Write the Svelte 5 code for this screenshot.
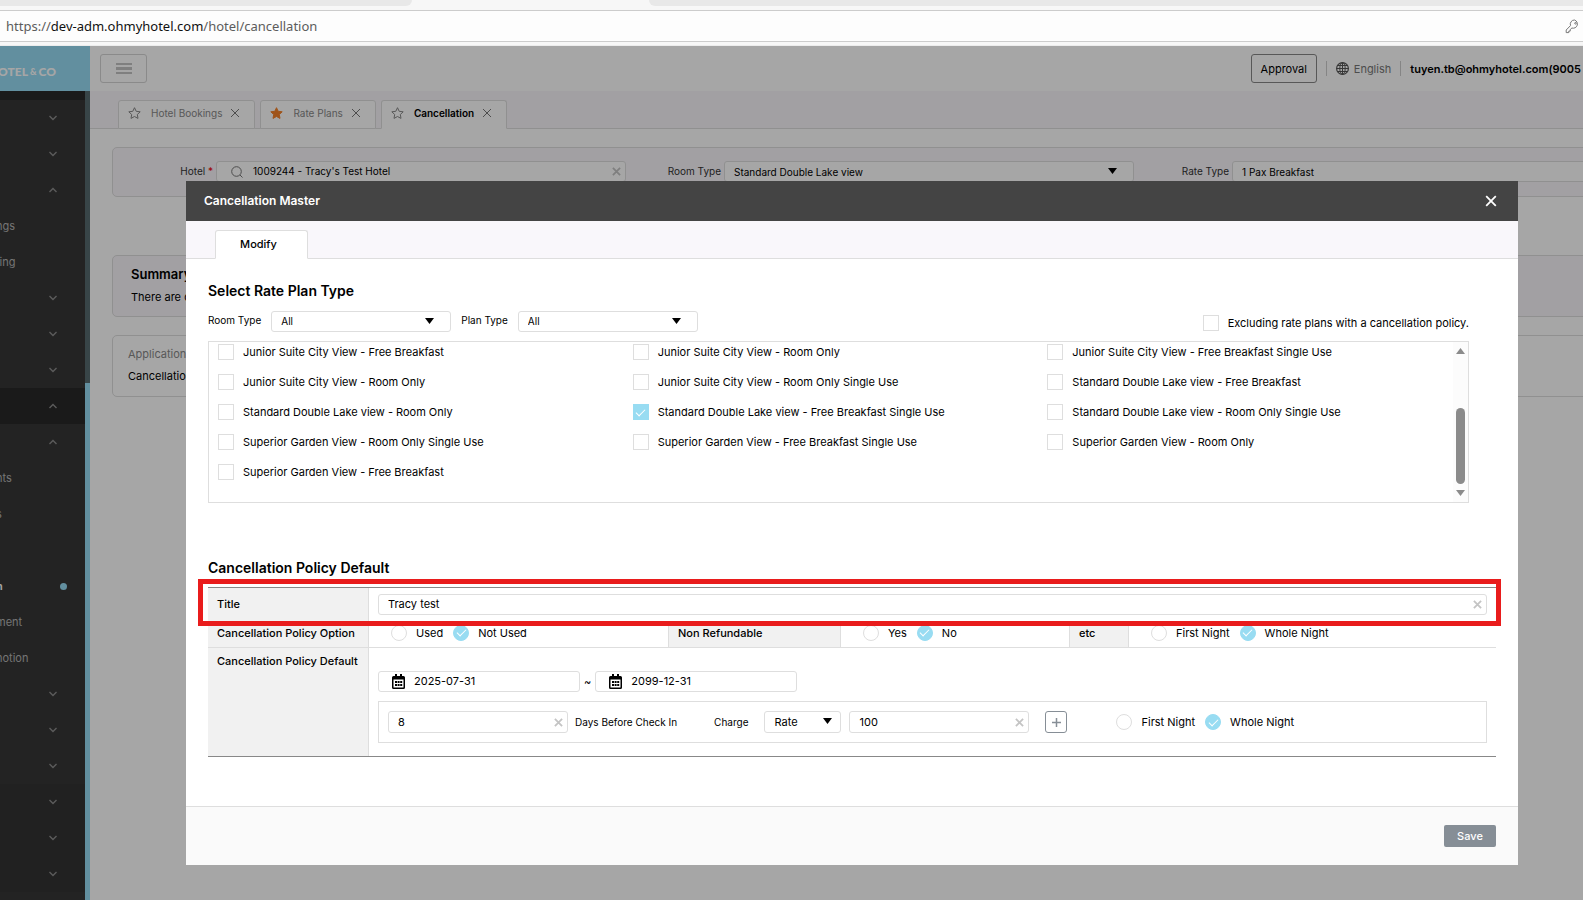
<script>
  const menu = [
    { icon: "down" },
    { icon: "down" },
    { icon: "up" },
    { label: "ngs" },
    { label: "ting" },
    { icon: "down" },
    { icon: "down" },
    { icon: "down" },
    { icon: "up", open: true },
    { icon: "up" },
    { label: "nts" },
    { label: "s" },
    {},
    { label: "n", current: true },
    { label: "ment" },
    { label: "notion" },
    { icon: "down" },
    { icon: "down" },
    { icon: "down" },
    { icon: "down", dark: true },
    { icon: "down", dark: true },
    { icon: "down", dark: true },
  ];

  const tabs = [
    { name: "Hotel Bookings" },
    { name: "Rate Plans", starred: true },
    { name: "Cancellation", active: true },
  ];

  let plans = $state([
    { name: "Junior Suite City View - Free Breakfast", checked: false },
    { name: "Junior Suite City View - Room Only", checked: false },
    { name: "Junior Suite City View - Free Breakfast Single Use", checked: false },
    { name: "Junior Suite City View - Room Only", checked: false },
    { name: "Junior Suite City View - Room Only Single Use", checked: false },
    { name: "Standard Double Lake view - Free Breakfast", checked: false },
    { name: "Standard Double Lake view - Room Only", checked: false },
    { name: "Standard Double Lake view - Free Breakfast Single Use", checked: true },
    { name: "Standard Double Lake view - Room Only Single Use", checked: false },
    { name: "Superior Garden View - Room Only Single Use", checked: false },
    { name: "Superior Garden View - Free Breakfast Single Use", checked: false },
    { name: "Superior Garden View - Room Only", checked: false },
    { name: "Superior Garden View - Free Breakfast", checked: false },
  ]);

  let title = $state("Tracy test");
  let hotel = $state("1009244 - Tracy's Test Hotel");
  let dateFrom = $state("2025-07-31");
  let dateTo = $state("2099-12-31");
  let days = $state("8");
  let rate = $state("100");
  let option = $state("Not Used");
  let nonRefundable = $state("No");
  let etc = $state("Whole Night");
  let charge = $state("Whole Night");
</script>

{#snippet caret()}
  <svg class="caret" width="9" height="6" viewBox="0 0 9 6"><path d="M0 0h9L4.500 6z" fill="#000" /></svg>
{/snippet}

{#snippet cross(size, width)}
  <svg width={size} height={size} viewBox="0 0 10 10" fill="none" stroke="currentColor" stroke-width={width}>
    <path d="M1 1l8 8M9 1L1 9" />
  </svg>
{/snippet}

{#snippet calendar()}
  <svg class="calendar" width="13" height="15" viewBox="0 0 13 15">
    <path fill="#000" fill-rule="evenodd" d="M3 0h2v2h3V0h2v2h1.500Q13 2 13 3.500V13.500Q13 15 11.500 15h-10Q0 15 0 13.500v-10Q0 2 1.500 2H3zM1.500 5.500v8h10v-8z" />
    <path fill="#000" d="M3 7h2v2H3zM5.600 7h2v2h-2zM8.200 7h2v2h-2zM3 10h2v2H3zM5.600 10h2v2h-2zM8.200 10h2v2h-2z" />
  </svg>
{/snippet}

<div class="app">
  <div class="browser">
    <div class="tabstrip"><span class="left"></span><span class="right"></span></div>
    <div class="urlbar">
      <span class="url">https://<b>dev-adm.ohmyhotel.com</b>/hotel/cancellation</span>
      <svg width="15" height="15" viewBox="0 0 15 15" fill="none" stroke="#777" stroke-linejoin="round">
        <path d="M9.500 1a4.200 4.200 0 0 0-4 5.600L1.200 11v2.600h2.600v-1.500h1.400v-1.500l1.700-1.600A4.200 4.200 0 1 0 9.500 1z" />
        <circle cx="10.500" cy="4.300" r=".8" />
      </svg>
    </div>
  </div>

  <div class="page">
    <aside>
      <div class="logo">OTEL<small>&amp;</small>CO</div>
      <div class="side">
        <nav>
          {#each menu as item}
            <div class="item" class:open={item.open} class:dark={item.dark} class:current={item.current}>
              <span>{item.label ?? ""}</span>
              {#if item.icon}
                <svg width="8" height="6" viewBox="0 0 8 6" fill="none" stroke="#8c8c8c" stroke-width="1.400">
                  <path d={item.icon === "up" ? "M.5 5L4 1.500 7.500 5" : "M.5 1L4 4.500 7.500 1"} />
                </svg>
              {/if}
              {#if item.current}<i class="dot"></i>{/if}
            </div>
          {/each}
        </nav>
        <div class="track"><div class="thumb"></div></div>
      </div>
    </aside>

    <main>
      <header>
        <button class="burger" aria-label="Menu">
          <svg width="16" height="11" viewBox="0 0 16 11" fill="#c4c4c4"><path d="M0 0h16v2H0zM0 4h16v3H0zM0 9h16v2H0z" /></svg>
        </button>
        <div class="account">
          <button class="approval">Approval</button>
          <span class="bar"></span>
          <svg width="13" height="13" viewBox="0 0 13 13" fill="none" stroke="#555">
            <circle cx="6.500" cy="6.500" r="5.900" stroke-width="1.200" />
            <ellipse cx="6.500" cy="6.500" rx="2.700" ry="5.900" />
            <path d="M6.500.6v11.800M.6 6.500h11.800M1.500 3.500h10M1.500 9.500h10" />
          </svg>
          <span class="lang">English</span>
          <span class="bar"></span>
          <strong>tuyen.tb@ohmyhotel.com(9005</strong>
        </div>
      </header>

      <div class="tabs">
        {#each tabs as tab}
          <div class="tab" class:active={tab.active}>
            <svg width="13" height="12" viewBox="0 0 13 12" stroke-linejoin="round" fill={tab.starred ? "#f5822a" : "none"} stroke={tab.starred ? "#f5822a" : "#888"}>
              <path d="M6.500.7l1.700 3.600 4 .5-2.900 2.700.7 3.900-3.500-1.900L3 11.400l.7-3.900L.8 4.800l4-.5z" />
            </svg>
            <span>{tab.name}</span>
            <button aria-label="Close {tab.name}">{@render cross(10, 1)}</button>
          </div>
        {/each}
      </div>

      <section class="card search">
        <div class="group">
          <label for="hotel">Hotel <em>*</em></label>
          <div class="field">
            <svg class="lens" width="12" height="12" viewBox="0 0 12 12" fill="none" stroke="#777">
              <circle cx="5.500" cy="5.500" r="4.800" /><path d="M9 9l2.500 2.500" />
            </svg>
            <input id="hotel" bind:value={hotel} />
            <button aria-label="Clear hotel">{@render cross(9, 2)}</button>
          </div>
        </div>
        <div class="group">
          <label for="room">Room Type</label>
          <div class="select wide">
            <select id="room"><option>Standard Double Lake view</option></select>
            {@render caret()}
          </div>
        </div>
        <div class="group">
          <label for="rateType">Rate Type</label>
          <div class="select wide">
            <select id="rateType"><option>1 Pax Breakfast</option></select>
          </div>
        </div>
      </section>

      <section class="card summary">
        <h3>Summary</h3>
        <p>There are c</p>
      </section>

      <section class="card policy">
        <p class="muted">Application</p>
        <p>Cancellation</p>
      </section>
    </main>

    <div class="overlay">
      <div class="modal" role="dialog" aria-labelledby="modal-title">
        <div class="modal-head">
          <h1 id="modal-title">Cancellation Master</h1>
          <button aria-label="Close">{@render cross(12, 1.5)}</button>
        </div>
        <div class="modal-tabs"><button>Modify</button></div>

        <div class="content">
          <h2>Select Rate Plan Type</h2>
          <div class="filters">
            <label for="filterRoom">Room Type</label>
            <div class="select">
              <select id="filterRoom"><option>All</option></select>
              {@render caret()}
            </div>
            <label for="filterPlan">Plan Type</label>
            <div class="select">
              <select id="filterPlan"><option>All</option></select>
              {@render caret()}
            </div>
            <label class="check exclude"><input type="checkbox" />Excluding rate plans with a cancellation policy.</label>
          </div>

          <div class="list">
            <div class="plans">
              {#each plans as plan}
                <label class="check"><input type="checkbox" bind:checked={plan.checked} />{plan.name}</label>
              {/each}
            </div>
            <div class="scroll">
              <svg width="9" height="6" viewBox="0 0 9 6"><path d="M4.500 0L9 6H0z" fill="#8b8b8b" /></svg>
              <div class="handle"></div>
              <svg width="9" height="6" viewBox="0 0 9 6"><path d="M0 0h9L4.500 6z" fill="#8b8b8b" /></svg>
            </div>
          </div>

          <h2 class="second">Cancellation Policy Default</h2>
          <div class="table-wrap">
            <table>
              <colgroup>
                <col class="c1" /><col class="c2" /><col class="c3" /><col class="c4" /><col class="c5" /><col />
              </colgroup>
              <tbody>
                <tr class="row-title">
                  <th><label for="title">Title</label></th>
                  <td colspan="5">
                    <div class="field">
                      <input id="title" bind:value={title} />
                      <button aria-label="Clear title">{@render cross(9, 2)}</button>
                    </div>
                  </td>
                </tr>
                <tr class="row-option">
                  <th>Cancellation Policy Option</th>
                  <td>
                    <div class="radios">
                      {#each ["Used", "Not Used"] as v}
                        <label class="check"><input type="radio" name="option" value={v} bind:group={option} />{v}</label>
                      {/each}
                    </div>
                  </td>
                  <th class="inner">Non Refundable</th>
                  <td>
                    <div class="radios">
                      {#each ["Yes", "No"] as v}
                        <label class="check"><input type="radio" name="refund" value={v} bind:group={nonRefundable} />{v}</label>
                      {/each}
                    </div>
                  </td>
                  <th class="inner">etc</th>
                  <td>
                    <div class="radios">
                      {#each ["First Night", "Whole Night"] as v}
                        <label class="check"><input type="radio" name="etc" value={v} bind:group={etc} />{v}</label>
                      {/each}
                    </div>
                  </td>
                </tr>
                <tr class="row-default">
                  <th>Cancellation Policy Default</th>
                  <td colspan="5">
                    <div class="dates">
                      <div class="field date">
                        {@render calendar()}
                        <input aria-label="From" bind:value={dateFrom} />
                      </div>
                      <span>~</span>
                      <div class="field date">
                        {@render calendar()}
                        <input aria-label="To" bind:value={dateTo} />
                      </div>
                    </div>
                    <div class="charge">
                      <div class="field">
                        <input id="days" bind:value={days} />
                        <button aria-label="Clear days">{@render cross(9, 2)}</button>
                      </div>
                      <label class="days" for="days">Days Before Check In</label>
                      <label class="charge-label" for="chargeType">Charge</label>
                      <div class="select small">
                        <select id="chargeType"><option>Rate</option></select>
                        {@render caret()}
                      </div>
                      <div class="field">
                        <input aria-label="Charge value" bind:value={rate} />
                        <button aria-label="Clear charge">{@render cross(9, 2)}</button>
                      </div>
                      <button class="add" aria-label="Add">
                        <svg width="9" height="9" viewBox="0 0 9 9" stroke="#868e96" stroke-width="1.500"><path d="M4.500 0v9M0 4.500h9" /></svg>
                      </button>
                      <div class="radios">
                        {#each ["First Night", "Whole Night"] as v}
                          <label class="check"><input type="radio" name="charge" value={v} bind:group={charge} />{v}</label>
                        {/each}
                      </div>
                    </div>
                  </td>
                </tr>
              </tbody>
            </table>
            <div class="marker"></div>
          </div>
        </div>

        <footer><button>Save</button></footer>
      </div>
    </div>
  </div>
</div>

<style>
  :global(body) {
    margin: 0;
    overflow: hidden;
  }

  .app {
    display: flex;
    flex-direction: column;
    min-height: 100vh;
    font-family: Inter, "Liberation Sans", sans-serif;
    font-size: 11px;
    line-height: 20px;
    color: #000;
  }

  .app * {
    box-sizing: border-box;
  }

  h1,
  h2,
  h3,
  p {
    margin: 0;
  }

  button,
  input,
  select {
    font: inherit;
    color: inherit;
  }

  button {
    display: flex;
    align-items: center;
    justify-content: center;
    padding: 0;
    border: none;
    background: none;
  }

  svg {
    flex: none;
    display: block;
  }

  /* browser chrome */
  .browser {
    height: 46px;
    background: #f7f7f7;
    border-bottom: 1px solid #ececec;
  }

  .tabstrip {
    display: flex;
    justify-content: space-between;
    height: 10px;
  }

  .tabstrip span {
    height: 6px;
    background: #e8e8e8;
  }

  .left {
    width: 26%;
    border-bottom-right-radius: 6px;
  }

  .right {
    width: 59%;
    border-bottom-left-radius: 6px;
  }

  .urlbar {
    display: flex;
    align-items: center;
    justify-content: space-between;
    height: 32px;
    padding: 0 3px 0 6px;
    background: #fdfdfd;
    border-top: 1px solid #ccc;
    border-bottom: 1px solid #ccc;
  }

  .url {
    font-family: "Noto Sans", "Open Sans", sans-serif;
    font-size: 13px;
    color: #5c5c5c;
  }

  .url b {
    font-weight: 400;
    color: #111;
  }

  .page {
    position: relative;
    flex: 1;
    display: flex;
    overflow: hidden;
  }

  /* sidebar */
  aside {
    flex: none;
    display: flex;
    flex-direction: column;
    width: 90px;
  }

  .logo {
    display: flex;
    align-items: center;
    justify-content: flex-end;
    height: 45px;
    padding: 7px 34px 0 0;
    background: #97dcf5;
    color: #fff;
    font-family: Lato, sans-serif;
    font-size: 12px;
    font-weight: 900;
  }

  .logo small {
    margin: 0 2px;
    font-size: 9px;
  }

  .side {
    flex: 1;
    display: flex;
    background: #373737;
  }

  nav {
    flex: 1;
    border-top: 9px solid #282828;
  }

  .item {
    display: flex;
    align-items: center;
    justify-content: space-between;
    height: 36px;
    padding-right: 28px;
    color: #b4b4b4;
  }

  .item span {
    margin-left: -4px;
  }

  .item.open {
    background: #282828;
  }

  .item.dark {
    background: #333;
  }

  .item.current {
    padding-right: 18px;
    color: #fff;
    font-weight: 600;
  }

  .dot {
    width: 7px;
    height: 7px;
    border-radius: 50%;
    background: #97dcf5;
  }

  .track {
    width: 5px;
    padding-top: 292px;
    background: #566a6f;
  }

  .thumb {
    height: 100%;
    background: #97dcf5;
  }

  /* page behind the dialog */
  main {
    flex: 1;
    min-width: 0;
    overflow: hidden;
    background: #fff;
  }

  header {
    display: flex;
    justify-content: space-between;
    align-items: center;
    height: 45px;
    padding-left: 10px;
  }

  .burger {
    width: 47px;
    height: 29px;
    border: 1px solid #d5d5d5;
    border-radius: 3px;
  }

  .account {
    display: flex;
    align-items: center;
    line-height: 18px;
    white-space: nowrap;
  }

  .approval {
    width: 66px;
    height: 29px;
    border: 1px solid #888;
    border-radius: 3px;
  }

  .bar {
    width: 1px;
    height: 15px;
    margin: 0 9px;
    background: #ccc;
  }

  .lang {
    margin-left: 5px;
    color: #777;
  }

  .account strong {
    padding-right: 2px;
    font-weight: 600;
  }

  .tabs {
    display: flex;
    align-items: flex-end;
    gap: 5px;
    height: 38px;
    padding-left: 28px;
    background: #f9f6fb;
    box-shadow: inset 0 -1px #dedede;
  }

  .tab {
    display: flex;
    align-items: center;
    height: 29px;
    padding: 0 14px 4px 9px;
    border: 1px solid #dedede;
    border-radius: 3px 3px 0 0;
    background: #fff;
    color: #888;
    font-size: 10px;
  }

  .tab span {
    margin: 0 8px 0 10px;
  }

  .tab button {
    color: #777;
  }

  .tab.active {
    border-bottom-color: #fff;
    font-weight: 600;
  }

  .tab.active span {
    color: #000;
  }

  .card {
    margin: 0 -60px 0 22px;
    border: 1px solid #dedede;
    border-radius: 5px;
  }

  .search {
    display: grid;
    grid-template-columns: repeat(3, 1fr);
    height: 50px;
    margin-top: 18px;
    padding: 13px 0 0 5px;
    background: #f9f6fb;
    font-size: 10px;
  }

  .group {
    display: flex;
  }

  .group label {
    width: 98px;
    padding-right: 3px;
    color: #333;
    text-align: right;
  }

  .group em {
    color: #e00;
    font-style: normal;
  }

  .group .field {
    flex: 1;
  }

  .lens {
    margin: 0 1px 0 14px;
  }

  .summary {
    height: 62px;
    margin-top: 58px;
    padding: 8px 18px;
    background: #f9f6fb;
  }

  .summary h3 {
    font-size: 13px;
    font-weight: 600;
  }

  .summary p {
    margin-top: 3px;
  }

  .policy {
    height: 62px;
    margin-top: 18px;
    padding: 8px 15px;
  }

  .policy p + p {
    margin-top: 2px;
  }

  .muted {
    color: #888;
  }

  /* shared form parts */
  .field {
    display: flex;
    align-items: center;
    height: 21px;
    padding-right: 4px;
    border: 1px solid #dedede;
    border-radius: 3px;
    background: #fff;
  }

  .field input {
    flex: 1;
    min-width: 0;
    height: 19px;
    padding: 0 9px 1px;
    border: none;
    background: none;
    outline: none;
  }

  .field button {
    color: #c4c4c4;
  }

  .select {
    position: relative;
    width: 180px;
    height: 21px;
  }

  .select.wide {
    flex: 1;
  }

  .select select {
    width: 100%;
    height: 100%;
    padding: 0 9px 3px;
    border: 1px solid #dedede;
    border-radius: 3px;
    background: #fff;
    appearance: none;
  }

  .caret {
    position: absolute;
    top: 7px;
    right: 17px;
    pointer-events: none;
  }

  .check {
    display: flex;
    align-items: center;
    gap: 9px;
    white-space: nowrap;
  }

  .check input {
    flex: none;
    display: grid;
    place-items: center;
    width: 16px;
    height: 16px;
    margin: 0;
    border: 1px solid #dedede;
    background: #fff;
    appearance: none;
  }

  .check input[type="radio"] {
    border-radius: 50%;
  }

  .check input:checked {
    border-color: #98dcf2;
    background: #98dcf2;
  }

  .check input:checked::before {
    content: "";
    width: 8px;
    height: 4px;
    border: solid #fff;
    border-width: 0 0 1px 1px;
    transform: translateY(-1px) rotate(-45deg);
  }

  /* dialog */
  .overlay {
    position: absolute;
    inset: 0;
    padding: 135px 65px 0 186px;
    background: rgba(0, 0, 0, 0.35);
  }

  .modal {
    background: #fff;
  }

  .modal-head {
    display: flex;
    align-items: center;
    justify-content: space-between;
    height: 40px;
    padding: 0 21px 0 18px;
    background: #444;
    color: #fff;
  }

  .modal-head h1 {
    font-size: 12px;
    font-weight: 600;
  }

  .modal-tabs {
    display: flex;
    align-items: flex-end;
    height: 38px;
    padding-left: 29px;
    background: #f9f7fb;
    box-shadow: inset 0 -1px #dedede;
  }

  .modal-tabs button {
    width: 93px;
    height: 29px;
    padding: 0 6px 2px 0;
    border: 1px solid #dedede;
    border-bottom-color: #fff;
    border-radius: 3px 3px 0 0;
    background: #fff;
    font-weight: 500;
  }

  .content {
    padding: 22px 22px 49px;
  }

  h2 {
    font-size: 14px;
    font-weight: 600;
  }

  .second {
    margin-top: 55px;
  }

  .filters {
    display: flex;
    gap: 10px;
    height: 21px;
    margin: 10px 27px 9px 0;
    font-size: 10px;
    line-height: 18px;
  }

  .exclude {
    margin-left: auto;
    padding-top: 3px;
    font-size: 11px;
  }

  .list {
    display: flex;
    height: 162px;
    margin-right: 27px;
    border: 1px solid #dedede;
  }

  .plans {
    flex: 1;
    display: grid;
    grid-template-columns: repeat(3, 1fr);
    align-content: start;
    row-gap: 10px;
  }

  .plans .check {
    padding-left: 9px;
  }

  .scroll {
    display: flex;
    flex-direction: column;
    align-items: center;
    width: 15px;
    padding: 6px 0;
    background: #fcfcfc;
  }

  .handle {
    width: 9px;
    height: 76px;
    margin: auto 0 6px;
    border-radius: 5px;
    background: #8b8b8b;
  }

  .table-wrap {
    position: relative;
    margin-top: 9px;
  }

  table {
    width: 100%;
    table-layout: fixed;
    border-collapse: separate;
    border-spacing: 0;
    border-top: 1px solid #888;
    border-bottom: 1px solid #888;
  }

  .c1 {
    width: 161px;
  }

  .c2 {
    width: 299px;
  }

  .c3 {
    width: 173px;
  }

  .c4 {
    width: 228px;
  }

  .c5 {
    width: 60px;
  }

  th {
    padding: 0 9px;
    border-right: 1px solid #dedede;
    background: #f1f1f1;
    font-weight: 500;
    text-align: left;
    white-space: nowrap;
  }

  th.inner {
    border-left: 1px solid #dedede;
  }

  td {
    padding: 0 9px;
  }

  .row-title > * {
    height: 33px;
  }

  .row-title th {
    padding-bottom: 2px;
  }

  .row-option > * {
    height: 27px;
    padding-bottom: 3px;
    border-bottom: 1px solid #dedede;
  }

  .row-default > * {
    height: 108px;
    vertical-align: top;
  }

  .row-default th {
    padding-top: 3px;
  }

  .row-default td {
    padding-top: 23px;
  }

  .radios {
    display: flex;
    gap: 10px;
  }

  td > .radios {
    padding-left: 13px;
  }

  .dates {
    display: flex;
    align-items: center;
    gap: 4px;
  }

  .date {
    width: 202px;
    padding-left: 13px;
  }

  .charge {
    display: flex;
    align-items: center;
    height: 42px;
    margin-top: 9px;
    padding: 0 9px;
    border: 1px solid #dedede;
  }

  .charge .field {
    width: 180px;
    height: 22px;
  }

  .days,
  .charge-label {
    font-size: 10px;
  }

  .days {
    margin: 0 37px 0 7px;
  }

  .charge .select {
    width: 77px;
    height: 22px;
    margin: 0 8px 0 16px;
  }

  .small .caret {
    right: 9px;
  }

  .add {
    width: 22px;
    height: 22px;
    margin: 0 49px 0 16px;
    border: 1px solid #868e96;
    border-radius: 3px;
  }

  .marker {
    position: absolute;
    top: -8px;
    left: -10px;
    right: -5px;
    height: 47px;
    border: 5px solid #e91c1c;
    pointer-events: none;
  }

  footer {
    display: flex;
    align-items: center;
    justify-content: flex-end;
    height: 59px;
    padding: 0 22px;
    border-top: 1px solid #dedede;
    background: #fafafa;
  }

  footer button {
    width: 52px;
    height: 22px;
    border-radius: 2px;
    background: #868e96;
    color: #fff;
    font-weight: 500;
  }
</style>
